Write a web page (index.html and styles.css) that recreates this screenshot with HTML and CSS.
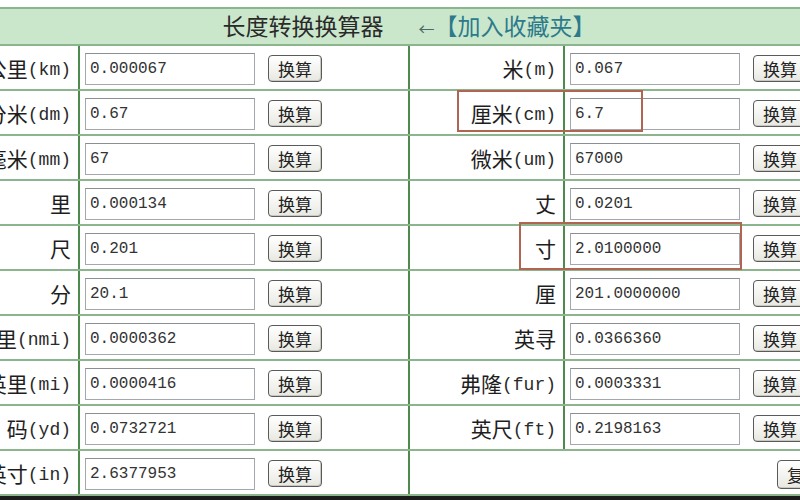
FILE: index.html
```html
<!DOCTYPE html>
<html>
<head>
  <meta charset="utf-8">
  <title>长度转换换算器</title>
  <link rel="stylesheet" href="styles.css">
</head>
<body>
  <div class="page">
    <table class="converter">
      <colgroup>
        <col class="col-unit">
        <col class="col-field">
        <col class="col-unit">
        <col class="col-field">
      </colgroup>
      <tr class="head">
        <td colspan="4">
          <span class="title">长度转换换算器</span>
          <a class="fav" href="#"><span class="arrow">←</span>【加入收藏夹】</a>
        </td>
      </tr>
      <tr>
        <td class="unit">公里<span class="en">(km)</span></td>
        <td class="field"><div class="box"><input type="text" value="0.000067"><button>换算</button></div></td>
        <td class="unit">米<span class="en">(m)</span></td>
        <td class="field"><div class="box"><input type="text" value="0.067"><button>换算</button></div></td>
      </tr>
      <tr>
        <td class="unit">分米<span class="en">(dm)</span></td>
        <td class="field"><div class="box"><input type="text" value="0.67"><button>换算</button></div></td>
        <td class="unit">厘米<span class="en">(cm)</span></td>
        <td class="field"><div class="box"><input type="text" value="6.7"><button>换算</button></div></td>
      </tr>
      <tr>
        <td class="unit">毫米<span class="en">(mm)</span></td>
        <td class="field"><div class="box"><input type="text" value="67"><button>换算</button></div></td>
        <td class="unit">微米<span class="en">(um)</span></td>
        <td class="field"><div class="box"><input type="text" value="67000"><button>换算</button></div></td>
      </tr>
      <tr>
        <td class="unit">里</td>
        <td class="field"><div class="box"><input type="text" value="0.000134"><button>换算</button></div></td>
        <td class="unit">丈</td>
        <td class="field"><div class="box"><input type="text" value="0.0201"><button>换算</button></div></td>
      </tr>
      <tr>
        <td class="unit">尺</td>
        <td class="field"><div class="box"><input type="text" value="0.201"><button>换算</button></div></td>
        <td class="unit">寸</td>
        <td class="field"><div class="box"><input type="text" value="2.0100000"><button>换算</button></div></td>
      </tr>
      <tr>
        <td class="unit">分</td>
        <td class="field"><div class="box"><input type="text" value="20.1"><button>换算</button></div></td>
        <td class="unit">厘</td>
        <td class="field"><div class="box"><input type="text" value="201.0000000"><button>换算</button></div></td>
      </tr>
      <tr>
        <td class="unit">海里<span class="en">(nmi)</span></td>
        <td class="field"><div class="box"><input type="text" value="0.0000362"><button>换算</button></div></td>
        <td class="unit">英寻</td>
        <td class="field"><div class="box"><input type="text" value="0.0366360"><button>换算</button></div></td>
      </tr>
      <tr>
        <td class="unit">英里<span class="en">(mi)</span></td>
        <td class="field"><div class="box"><input type="text" value="0.0000416"><button>换算</button></div></td>
        <td class="unit">弗隆<span class="en">(fur)</span></td>
        <td class="field"><div class="box"><input type="text" value="0.0003331"><button>换算</button></div></td>
      </tr>
      <tr>
        <td class="unit">码<span class="en">(yd)</span></td>
        <td class="field"><div class="box"><input type="text" value="0.0732721"><button>换算</button></div></td>
        <td class="unit">英尺<span class="en">(ft)</span></td>
        <td class="field"><div class="box"><input type="text" value="0.2198163"><button>换算</button></div></td>
      </tr>
      <tr>
        <td class="unit">英寸<span class="en">(in)</span></td>
        <td class="field"><div class="box"><input type="text" value="2.6377953"><button>换算</button></div></td>
        <td class="reset" colspan="2"><button>复位</button></td>
      </tr>
    </table>
    <div class="foot"></div>

    <!-- highlight frames drawn over the table -->
    <div class="mark mark-cm"></div>
    <div class="mark mark-cun"></div>
  </div>
</body>
</html>
```

FILE: styles.css
```css
body {
  margin: 0;
  padding: 0;
  background-color: #fff;
  font-family: "Noto Sans CJK SC", sans-serif;
  overflow: hidden;
}

.page {
  position: relative;
  width: 800px;
  height: 500px;
  padding-top: 7px;
  box-sizing: border-box;
  overflow: hidden;
}

.converter {
  margin-left: -77px;
  width: 970px;
  table-layout: fixed;
  border-collapse: collapse;
}

.col-unit {
  width: 155px;
}

.col-field {
  width: 330px;
}

.converter td {
  padding: 0;
  border-top: 2px solid #8db58d;
  border-bottom: 2px solid #8db58d;
  border-left: 2px solid #4d8a4d;
  border-right: 2px solid #4d8a4d;
}

.head td {
  height: 32px;
  background-color: #cbe7cb;
  text-align: center;
  font-size: 23px;
  line-height: 32px;
}

.title {
  color: #2a2a2a;
  margin-right: 30px;
}

.fav {
  color: #2c7a8c;
  text-decoration: none;
}

.arrow {
  color: #4a6a6a;
  font-size: 16px;
}

.converter tr:not(.head) td {
  height: 43px;
}

.unit {
  text-align: right;
  padding-right: 7px !important;
  font-size: 21px;
  color: #1e1e1e;
  white-space: nowrap;
}

/* half-width latin abbreviations after the unit name */
.unit .en {
  font-family: "Liberation Mono", monospace;
  font-size: 18px;
  color: #2a2a2a;
  vertical-align: 2px;
}

.field .box {
  display: flex;
  align-items: center;
  gap: 13px;
  padding-left: 5px;
  padding-top: 2px;
}

.field input {
  width: 170px;
  height: 32px;
  box-sizing: border-box;
  border: 1px solid #a3a8ad;
  border-top-color: #8a8f94;
  padding: 0 4px;
  font-family: "Liberation Mono", monospace;
  font-size: 16px;
  color: #333;
  background: #fff;
}

button {
  height: 27px;
  padding: 0 9px;
  border: 1px solid #5a5a5a;
  border-radius: 4px;
  background: linear-gradient(#ffffff, #e8e8e2);
  font-family: "Noto Sans CJK SC", sans-serif;
  font-size: 17px;
  line-height: 24px;
  color: #222;
  box-shadow: inset -1px -1px 0 #c9c9c0;
}

.reset {
  text-align: right;
  padding-right: 62px !important;
}

.reset button {
  height: 29px;
  margin-top: 4px;
}

.foot {
  height: 8px;
  background-color: #1c1c1c;
}

.mark {
  position: absolute;
  border: 2px solid #b06552;
}

.mark-cm {
  left: 457px;
  top: 90px;
  width: 182px;
  height: 38px;
}

.mark-cun {
  left: 519px;
  top: 222px;
  width: 219px;
  height: 44px;
}
```
